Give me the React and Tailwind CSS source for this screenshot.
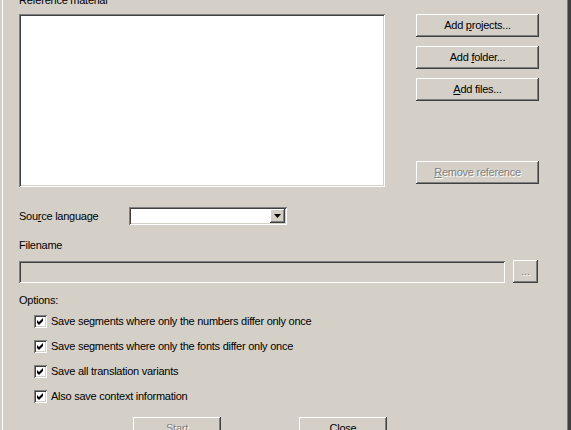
export default function App() {
  const raised =
    "bg-[#d4d0c8] shadow-[inset_-1px_-1px_#404040,inset_1px_1px_#ffffff,inset_-2px_-2px_#808080,inset_2px_2px_#d4d0c8]";
  const sunken =
    "shadow-[inset_1px_1px_#808080,inset_-1px_-1px_#ffffff,inset_2px_2px_#404040,inset_-2px_-2px_#d4d0c8]";
  const disabled = "text-[#808080] [text-shadow:1px_1px_0_#ffffff]";

  const options = [
    "Save segments where only the numbers differ only once",
    "Save segments where only the fonts differ only once",
    "Save all translation variants",
    "Also save context information",
  ];

  return (
    <div className="w-[571px] h-[430px] overflow-hidden bg-[#d4d0c8] text-black text-[11px] leading-[13px] tracking-[-0.25px] font-['Tahoma','Liberation_Sans',sans-serif] shadow-[inset_2px_0_#d4d0c8,inset_3px_0_#ffffff,inset_-1px_0_#404040,inset_-3px_0_#404040,inset_-4px_0_#808080]">
      <div className="pl-[19px] -mt-[6px]">
        <div className="flex">
          <div className="w-[366px]">
            <div className="h-[13px]">Reference material</div>
            <div className={`mt-[7px] h-[173px] bg-white ${sunken}`} />
          </div>
          <div className="ml-[31px] pt-[20px] flex flex-col">
            <button className={`w-[123px] h-[23px] ${raised}`}>
              Add <span className="underline">p</span>rojects...
            </button>
            <button className={`mt-[9px] w-[123px] h-[23px] ${raised}`}>
              Add <span className="underline">f</span>older...
            </button>
            <button className={`mt-[9px] w-[123px] h-[23px] ${raised}`}>
              <span className="underline">A</span>dd files...
            </button>
            <button className={`mt-[60px] w-[123px] h-[23px] ${raised} ${disabled}`}>
              <span className="underline">R</span>emove reference
            </button>
          </div>
        </div>

        <div className="mt-[20px] flex items-center h-[18px]">
          <div className="w-[110px]">
            Sou<span className="underline">r</span>ce language
          </div>
          <div className={`w-[158px] h-[18px] bg-white flex justify-end p-[2px] ${sunken}`}>
            <div className={`w-[15px] h-[14px] flex items-center justify-center ${raised}`}>
              <svg width="7" height="4" viewBox="0 0 7 4">
                <polygon points="0,0 7,0 3.5,4" fill="#000" />
              </svg>
            </div>
          </div>
        </div>

        <div className="mt-[14px]">Filename</div>
        <div className="mt-[8px] flex items-end">
          <div className={`w-[486px] h-[22px] ${sunken}`} />
          <button className={`ml-[8px] w-[25px] h-[23px] ${raised} ${disabled}`}>
            ...
          </button>
        </div>

        <div className="mt-[11px]">Options:</div>
        <div className="mt-[8px] pl-[15px] flex flex-col gap-[12px]">
          {options.map((o) => (
            <div key={o} className="flex items-center h-[13px]">
              <div className={`w-[13px] h-[13px] bg-white ${sunken}`}>
                <svg width="13" height="13" viewBox="0 0 13 13">
                  <polygon points="3,5 5,7 9,3 9,6 5,10 3,8" fill="#000" />
                </svg>
              </div>
              <span className="ml-[4px]">{o}</span>
            </div>
          ))}
        </div>

        <div className="mt-[14px] flex">
          <button className={`ml-[114px] w-[88px] h-[23px] ${raised} ${disabled}`}>
            Start
          </button>
          <button className={`ml-[78px] w-[88px] h-[23px] ${raised}`}>Close</button>
        </div>
      </div>
    </div>
  );
}
